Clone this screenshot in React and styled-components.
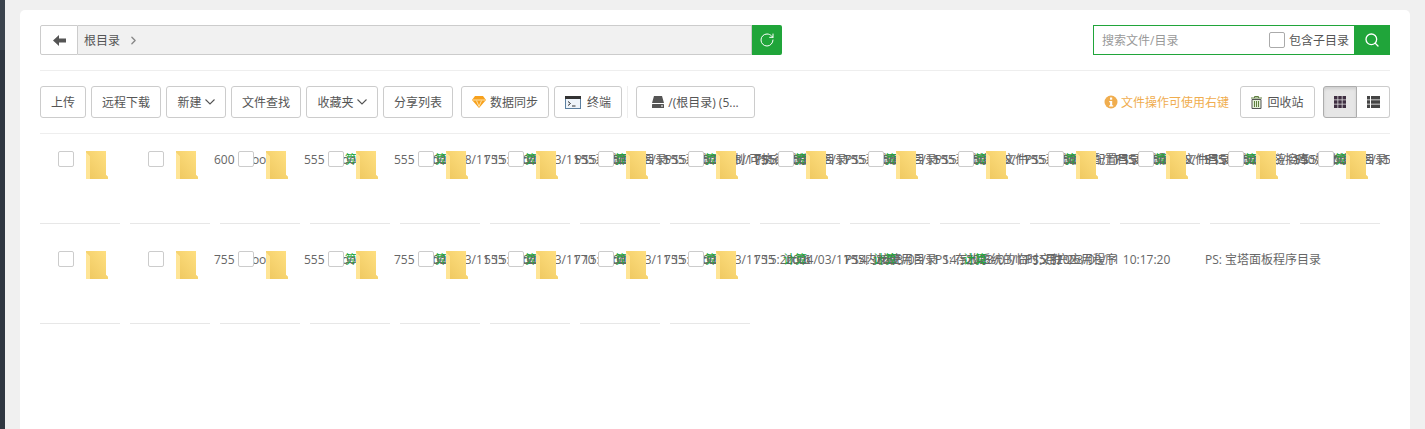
import React from "react";
import styled, { createGlobalStyle } from "styled-components";
import { ChevronRight, RotateCw, Search } from "lucide-react";

const FONT = `"Open Sans", "Noto Sans CJK SC", sans-serif`;

const GlobalStyle = createGlobalStyle`
  html, body {
    margin: 0;
    height: 100%;
    background: #f0f0f0;
    font-family: ${FONT};
    font-size: 12px;
    color: #555;
    overflow: hidden;
  }
  #root { height: 100%; }
  * { box-sizing: border-box; }
`;

const Page = styled.div`
  display: flex;
  height: 429px;
`;

const Sidebar = styled.div`
  width: 5px;
  flex: none;
  background: linear-gradient(#3b434d 0, #3b434d 50px, #2f3741 50px);
`;

const Main = styled.div`
  flex: 1;
  padding: 10px 15px 0;
  min-width: 0;
`;

const Card = styled.div`
  height: 419px;
  background: #fff;
  border-radius: 5px 5px 0 0;
  padding: 15px 20px 0;
  overflow: hidden;
`;

const PathRow = styled.div`
  display: flex;
  justify-content: space-between;
  height: 46px;
  border-bottom: 1px solid #eee;
`;

const PathBar = styled.div`
  display: flex;
  width: 742px;
  height: 30px;
`;

const BackBtn = styled.div`
  width: 38px;
  display: flex;
  align-items: center;
  justify-content: center;
  border: 1px solid #ccc;
  border-radius: 2px 0 0 2px;
`;

const Crumbs = styled.div`
  flex: 1;
  display: flex;
  align-items: center;
  gap: 7px;
  padding-left: 6px;
  background: #f1f1f1;
  border: 1px solid #ccc;
  border-left: 0;
  color: #555;
`;

const RefreshBtn = styled.div`
  width: 30px;
  display: flex;
  align-items: center;
  justify-content: center;
  background: #20a53a;
  color: #fff;
  border-radius: 0 2px 2px 0;
`;

const SearchBox = styled.div`
  display: flex;
  width: 297px;
  height: 30px;
`;

const SearchField = styled.div`
  flex: 1;
  display: flex;
  align-items: center;
  justify-content: space-between;
  padding: 0 5px 0 8px;
  border: 1px solid #20a53a;
  border-right: 0;
  color: #999;
`;

const SearchOption = styled.label`
  display: flex;
  align-items: center;
  gap: 4px;
  color: #555;
`;

const SearchBtn = styled.div`
  width: 36px;
  display: flex;
  align-items: center;
  justify-content: center;
  background: #20a53a;
  color: #fff;
`;

const Toolbar = styled.div`
  display: flex;
  justify-content: space-between;
  align-items: center;
  height: 63px;
  border-bottom: 1px solid #eee;
`;

const ToolGroup = styled.div`
  display: flex;
  align-items: center;
  gap: 5px;
`;

const Btn = styled.div`
  height: 32px;
  display: flex;
  align-items: center;
  justify-content: center;
  gap: ${(p) => p.$gap || 3}px;
  width: ${(p) => p.$w}px;
  margin-left: ${(p) => p.$ml || 0}px;
  border: 1px solid #ccc;
  border-radius: 3px;
  background: #fff;
  color: #555;
  white-space: nowrap;
`;

const Separator = styled.div`
  width: 1px;
  height: 32px;
  background: #eee;
`;

const Tip = styled.div`
  display: flex;
  align-items: center;
  gap: 3px;
  margin-right: 6px;
  color: #f0ad4e;
`;

const ViewSwitch = styled.div`
  display: flex;
  margin-left: 3px;
`;

const ViewBtn = styled.div`
  width: ${(p) => (p.$active ? 34 : 33)}px;
  height: 32px;
  display: flex;
  align-items: center;
  justify-content: center;
  border: 1px solid ${(p) => (p.$active ? "#adadad" : "#ccc")};
  border-left-width: ${(p) => (p.$active ? 1 : 0)}px;
  border-radius: ${(p) => (p.$active ? "3px 0 0 3px" : "0 3px 3px 0")};
  background: ${(p) => (p.$active ? "#e6e6e6" : "#fff")};
  box-shadow: ${(p) => (p.$active ? "inset 0 2px 3px rgba(0,0,0,.1)" : "none")};
`;

const FileList = styled.div`
  display: flex;
  flex-wrap: wrap;
  align-content: flex-start;
  gap: 10px;
  width: 1350px;
  height: 280px;
  overflow: hidden;
`;

const FileItem = styled.div`
  width: 80px;
  height: 90px;
  border-bottom: 1px solid #e7e7e7;
`;

const FileRow = styled.div`
  display: flex;
  align-items: flex-start;
  width: 800px;
  padding: 17px 0 0 18px;
  line-height: 17px;
  white-space: nowrap;
  color: #666;
`;

const Check = styled.span`
  width: 16px;
  height: 16px;
  flex: none;
  background: #fff;
  border: 1px solid #ccc;
  border-radius: 2px;
`;

const SearchCheck = styled(Check)`
  border-color: #aaa;
`;

const FolderSvg = styled.svg`
  flex: none;
  display: block;
  margin-left: 12px;
`;

const Cell = styled.span`
  flex: none;
  width: ${(p) => p.$w}px;
  margin-left: ${(p) => p.$ml || 0}px;
`;

const GreenCell = styled(Cell)`
  color: #20a53a;
`;

// one entry per directory: permission, owner, date, remark
const FILES = [
  ["600", "root", "2023/08/11 15:31:20", "PS: 系统回收目录"],
  ["555", "root", "2023/03/11 15:20:00", "PS: 系统二进制/可执行文件"],
  ["555", "root", "2023/08/11 15:20:16", "PS: 系统引导目录"],
  ["755", "root", "2023/08/11 15:20:16", "PS: 系统硬件目录"],
  ["555", "root", "2023/08/11 15:20:16", "PS: 系统设备文件"],
  ["555", "root", "2023/03/11 15:20:16", "PS: 系统软件配置目录"],
  ["755", "root", "2023/08/11 15:20:16", "PS: 系统配置文件目录"],
  ["755", "root", "2023/03/11 15:20:16", "PS: 系统动态链接库"],
  ["555", "root", "2023/08/11 15:20:16", "PS: 媒体设备目录"],
  ["755", "root", "2023/03/11 15:20:16", ""],
  ["755", "root", "2023/08/11 15:20:16", "PS: 第三方软件目录"],
  ["555", "root", "2023/03/11 15:20:16", "PS: 内核进程目录"],
  ["550", "root", "2023/08/11 15:20:16", "PS: 管理员主目录"],
  ["555", "root", "2023/03/11 15:20:16", "PS: 系统程序库目录"],
  ["755", "root", "2023/08/11 15:20:16", "PS: 服务数据目录"],
  ["755", "root", "2023/03/11 15:31:20", ""],
  ["555", "root", "2023/03/11 15:20:00", ""],
  ["755", "root", "2023/03/11 15:20:16", ""],
  ["555", "root", "2023/03/11 15:20:16", "PS: 内核使用目录"],
  ["770", "root", "2024/03/11 14:33:52", "PS: 存放系统的临时文件"],
  ["755", "root", "2023/03/11 14:52:48", "PS: 用户应用程序"],
  ["755", "root", "2023/03/11 15:31:26", ""],
  ["755", "root", "2023/03/11 10:17:20", "PS: 宝塔面板程序目录"],
];

function BackArrow() {
  return (
    <svg width="13" height="11" viewBox="0 0 13 11">
      <path d="M0 5.5L6 0V3.5H13V7.5H6V11Z" fill="#555" />
    </svg>
  );
}

function Caret() {
  return (
    <svg width="10" height="6" viewBox="0 0 10 6">
      <path d="M0.5 0.5L5 5L9.5 0.5" stroke="#555" strokeWidth="1.1" fill="none" />
    </svg>
  );
}

function Folder() {
  return (
    <FolderSvg width="22" height="28" viewBox="0 0 22 28">
      <defs>
        <linearGradient id="folderBody" x1="1" y1="0" x2="0" y2="1">
          <stop offset="0" stopColor="#ffe082" />
          <stop offset="1" stopColor="#eec75e" />
        </linearGradient>
      </defs>
      <path d="M0 0H20V24L22 26V28H0Z" fill="#f2cf6e" />
      <path d="M4 5V28H0V1Z" fill="#ffe596" />
      <path d="M0 0H20V24L22 26V28H4V5L0 1Z" fill="url(#folderBody)" />
    </FolderSvg>
  );
}

function Diamond() {
  return (
    <svg width="14" height="12" viewBox="0 0 14 12">
      <path d="M3 0H11L14 4L7 12L0 4Z" fill="#f7a11d" />
      <path d="M0.8 4H13.2M4.5 4.6L7 10.5L9.5 4.6" stroke="#ffe2a8" strokeWidth="1" fill="none" />
    </svg>
  );
}

function Terminal() {
  return (
    <svg width="16" height="13" viewBox="0 0 16 13">
      <rect x="0.5" y="0.5" width="15" height="12" fill="#eef4fa" stroke="#5b7fa0" />
      <rect x="0" y="0" width="16" height="3" fill="#333" />
      <path d="M3 5.5L5.5 7.5L3 9.5" stroke="#333" fill="none" />
      <path d="M7 10H10.5" stroke="#333" />
    </svg>
  );
}

function Disk() {
  return (
    <svg width="12" height="12" viewBox="0 0 12 12">
      <path d="M2 0H10L12 7H0Z" fill="#555" />
      <rect x="0" y="8" width="12" height="4" rx="0.5" fill="#555" />
      <rect x="9" y="9.5" width="2" height="1" fill="#fff" />
    </svg>
  );
}

function Info() {
  return (
    <svg width="14" height="14" viewBox="0 0 14 14">
      <circle cx="7" cy="7" r="6.5" fill="#f0ad4e" />
      <rect x="6" y="2.5" width="2.2" height="2.2" fill="#fff" />
      <path d="M5.2 6H8.2V10.2H9.2V11.4H5.2V10.2H6.1V7.2H5.2Z" fill="#fff" />
    </svg>
  );
}

function Trash() {
  return (
    <svg width="11" height="13" viewBox="0 0 11 13">
      <path d="M1 3.5H10V12.5H1Z" fill="#e4efd8" stroke="#555" />
      <path d="M0 2H11M3.5 2V0.5H7.5V2M3.5 5V11M5.5 5V11M7.5 5V11" stroke="#5f7f3f" fill="none" />
    </svg>
  );
}

function GridIcon() {
  const dots = [0, 4.25, 8.5];
  return (
    <svg width="12" height="12" viewBox="0 0 12 12">
      {dots.map((y) =>
        dots.map((x) => <rect key={`${x}-${y}`} x={x} y={y} width="3.5" height="3.5" fill="#3f2f42" />)
      )}
    </svg>
  );
}

function ListIcon() {
  const rows = [0, 4.25, 8.5];
  return (
    <svg width="13" height="12" viewBox="0 0 13 12">
      {rows.map((y) => (
        <g key={y} fill="#444">
          <rect x="0" y={y} width="3" height="3.5" />
          <rect x="4" y={y} width="9" height="3.5" />
        </g>
      ))}
    </svg>
  );
}

export default function App() {
  return (
    <Page>
      <GlobalStyle />
      <Sidebar />
      <Main>
        <Card>
          <PathRow>
            <PathBar>
              <BackBtn>
                <BackArrow />
              </BackBtn>
              <Crumbs>
                根目录
                <ChevronRight size={13} strokeWidth={2.5} color="#888" />
              </Crumbs>
              <RefreshBtn>
                <RotateCw size={16} strokeWidth={1.5} />
              </RefreshBtn>
            </PathBar>
            <SearchBox>
              <SearchField>
                搜索文件/目录
                <SearchOption>
                  <SearchCheck />
                  包含子目录
                </SearchOption>
              </SearchField>
              <SearchBtn>
                <Search size={16} strokeWidth={2} />
              </SearchBtn>
            </SearchBox>
          </PathRow>

          <Toolbar>
            <ToolGroup>
              <Btn $w={46}>上传</Btn>
              <Btn $w={70}>远程下载</Btn>
              <Btn $w={60}>
                新建
                <Caret />
              </Btn>
              <Btn $w={70}>文件查找</Btn>
              <Btn $w={72}>
                收藏夹
                <Caret />
              </Btn>
              <Btn $w={70}>分享列表</Btn>
              <Btn $w={88} $ml={3} $gap={4}>
                <Diamond />
                数据同步
              </Btn>
              <Btn $w={68} $gap={6}>
                <Terminal />
                终端
              </Btn>
              <Separator />
              <Btn $w={119} $ml={3} $gap={4}>
                <Disk />
                /(根目录) (5...
              </Btn>
            </ToolGroup>
            <ToolGroup>
              <Tip>
                <Info />
                文件操作可使用右键
              </Tip>
              <Btn $w={75} $gap={5}>
                <Trash />
                回收站
              </Btn>
              <ViewSwitch>
                <ViewBtn $active>
                  <GridIcon />
                </ViewBtn>
                <ViewBtn>
                  <ListIcon />
                </ViewBtn>
              </ViewSwitch>
            </ToolGroup>
          </Toolbar>

          <FileList>
            {FILES.map(([perm, owner, date, ps], i) => (
              <FileItem key={i}>
                <FileRow>
                  <Check />
                  <Folder />
                  <Cell $w={33} $ml={106}>{perm}</Cell>
                  <Cell $w={86}>{owner}</Cell>
                  <GreenCell $w={93}>计算</GreenCell>
                  <Cell $w={149}>{date}</Cell>
                  <Cell $w={200}>{ps}</Cell>
                </FileRow>
              </FileItem>
            ))}
          </FileList>
        </Card>
      </Main>
    </Page>
  );
}
